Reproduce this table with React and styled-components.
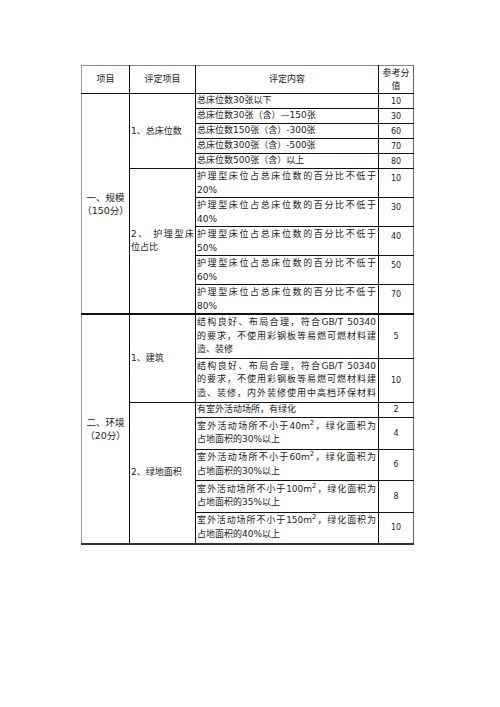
import React from 'react'
import styled, { createGlobalStyle } from 'styled-components'

const GlobalStyle = createGlobalStyle`
  html, body {
    margin: 0;
    background: #fff;
  }
`

const baseFont = 'font-family: "DejaVu Sans", "Noto Sans CJK SC", sans-serif;'
const lineDark = '#111'

const Page = styled.div`
  width: 500px;
  height: 707px;
  box-sizing: border-box;
  padding: 65px 0 0 81px;
`

const Table = styled.table`
  ${baseFont}
  border-collapse: collapse;
  table-layout: fixed;
  width: 332px;
  color: #222;
  font-size: 9px;
`

const Row = styled.tr`
  height: ${props => props.$h}px;
`

const cellBase = `
  border: 1px solid ${lineDark};
  padding: 0;
  line-height: 13px;
`

const HeadCell = styled.th`
  ${cellBase}
  font-weight: normal;
  text-align: center;
  vertical-align: middle;
  border-top: 1px solid #888;
  ${props => props.$first && 'border-left: 1px solid #999;'}
  ${props => props.$last && 'border-right: 1px solid #666;'}
`

const ItemCell = styled.td`
  ${cellBase}
  text-align: center;
  vertical-align: middle;
  border-left: 1px solid #999;
  font-size: 9.5px;
  line-height: 13px;
  ${props => props.$sep && `border-top: 2px solid ${lineDark};`}
  ${props => props.$end && `border-bottom: 2px solid #333;`}
`

const SubCell = styled.td`
  ${cellBase}
  vertical-align: middle;
  padding: 0 1px 0 1px;
  ${props => props.$sep && `border-top: 2px solid ${lineDark};`}
  ${props => props.$end && `border-bottom: 2px solid #333;`}
`

const ContentCell = styled.td`
  ${cellBase}
  vertical-align: ${props => props.$top ? 'top' : 'middle'};
  padding: ${props => props.$top ? '1px' : '0'} 2px 0 1px;
  line-height: 13.5px;
  ${props => props.$sep && `border-top: 2px solid ${lineDark};`}
  ${props => props.$end && `border-bottom: 2px solid #333;`}
`

const ScoreCell = styled.td`
  ${cellBase}
  font-size: 8px;
  text-align: center;
  vertical-align: ${props => props.$top ? 'top' : 'middle'};
  padding-top: ${props => props.$top ? '3px' : '0'};
  border-right: 1px solid #666;
  ${props => props.$sep && `border-top: 2px solid ${lineDark};`}
  ${props => props.$end && `border-bottom: 2px solid #333;`}
`

const Line = styled.span`
  display: block;
  white-space: nowrap;
  text-align: ${props => props.$center ? 'center' : 'left'};
  ${props => props.$justify && `
    white-space: normal;
    text-align: justify;
    text-align-last: justify;
  `}
`

const Sup = styled.sup`
  font-size: 7px;
  line-height: 0;
  vertical-align: 4px;
`

const m2 = <>m<Sup>2</Sup></>

const building = ['结构良好、布局合理，符合GB/T 50340', '的要求，不使用彩钢板等易燃可燃材料建']
const nursing = '护理型床位占总床位数的百分比不低于'

const sections = [
  {
    name: ['一、规模', '（150分）'],
    groups: [
      {
        name: ['1、总床位数'],
        rows: [
          { h: 15, text: ['总床位数30张以下'], score: '10' },
          { h: 15, text: ['总床位数30张（含）—150张'], score: '30' },
          { h: 15, text: ['总床位数150张（含）-300张'], score: '60' },
          { h: 15, text: ['总床位数300张（含）-500张'], score: '70' },
          { h: 15, text: ['总床位数500张（含）以上'], score: '80' },
        ],
      },
      {
        name: ['2、 护理型床', '位占比'],
        top: true,
        rows: [
          { h: 29, text: [nursing, '20%'], score: '10' },
          { h: 29, text: [nursing, '40%'], score: '30' },
          { h: 29, text: [nursing, '50%'], score: '40' },
          { h: 29, text: [nursing, '60%'], score: '50' },
          { h: 28, text: [nursing, '80%'], score: '70' },
        ],
      },
    ],
  },
  {
    name: ['二、环境', '（20分）'],
    groups: [
      {
        name: ['1、建筑'],
        rows: [
          { h: 44, text: [...building, '造、装修'], score: '5' },
          { h: 44, text: [...building, '造、装修，内外装修使用中高档环保材料'], score: '10', justifyAll: true },
        ],
      },
      {
        name: ['2、绿地面积'],
        rows: [
          { h: 15, text: ['有室外活动场所，有绿化'], score: '2' },
          { h: 32, text: [<>室外活动场所不小于40{m2}，绿化面积为</>, '占地面积的30%以上'], score: '4' },
          { h: 31, text: [<>室外活动场所不小于60{m2}，绿化面积为</>, '占地面积的30%以上'], score: '6' },
          { h: 32, text: [<>室外活动场所不小于100{m2}，绿化面积为</>, '占地面积的35%以上'], score: '8' },
          { h: 32, text: [<>室外活动场所不小于150{m2}，绿化面积为</>, '占地面积的40%以上'], score: '10' },
        ],
      },
    ],
  },
]

const Lines = ({ lines, center, justifyAll }) => lines.map((l, i) => (
  <Line
    key={i}
    $center={center}
    $justify={!center && (justifyAll || i < lines.length - 1)}
  >
    {l}
  </Line>
))

const App = () => {
  const body = []
  sections.forEach((section, si) => {
    const sectionRows = section.groups.reduce((n, g) => n + g.rows.length, 0)
    const lastSection = si === sections.length - 1
    section.groups.forEach((group, gi) => {
      group.rows.forEach((row, ri) => {
        const firstInSection = gi === 0 && ri === 0
        const sep = si > 0 && firstInSection
        const lastGroup = gi === section.groups.length - 1
        const end = lastSection && lastGroup && ri === group.rows.length - 1
        body.push(
          <Row key={`${si}-${gi}-${ri}`} $h={row.h}>
            {firstInSection && (
              <ItemCell rowSpan={sectionRows} $sep={sep} $end={lastSection}>
                <Lines lines={section.name} center />
              </ItemCell>
            )}
            {ri === 0 && (
              <SubCell rowSpan={group.rows.length} $sep={sep} $end={lastSection && lastGroup}>
                <Lines lines={group.name} />
              </SubCell>
            )}
            <ContentCell $top={group.top} $sep={sep} $end={end}>
              <Lines lines={row.text} justifyAll={row.justifyAll} />
            </ContentCell>
            <ScoreCell $top={group.top} $sep={sep} $end={end}>
              {row.score}
            </ScoreCell>
          </Row>
        )
      })
    })
  })

  return (
    <Page>
      <GlobalStyle />
      <Table>
        <colgroup>
          <col style={{ width: 48 }} />
          <col style={{ width: 66 }} />
          <col style={{ width: 183 }} />
          <col style={{ width: 35 }} />
        </colgroup>
        <thead>
          <Row $h={28}>
            <HeadCell $first>项目</HeadCell>
            <HeadCell>评定项目</HeadCell>
            <HeadCell>评定内容</HeadCell>
            <HeadCell $last>
              <Line $center>参考分</Line>
              <Line $center>值</Line>
            </HeadCell>
          </Row>
        </thead>
        <tbody>{body}</tbody>
      </Table>
    </Page>
  )
}

export default App
